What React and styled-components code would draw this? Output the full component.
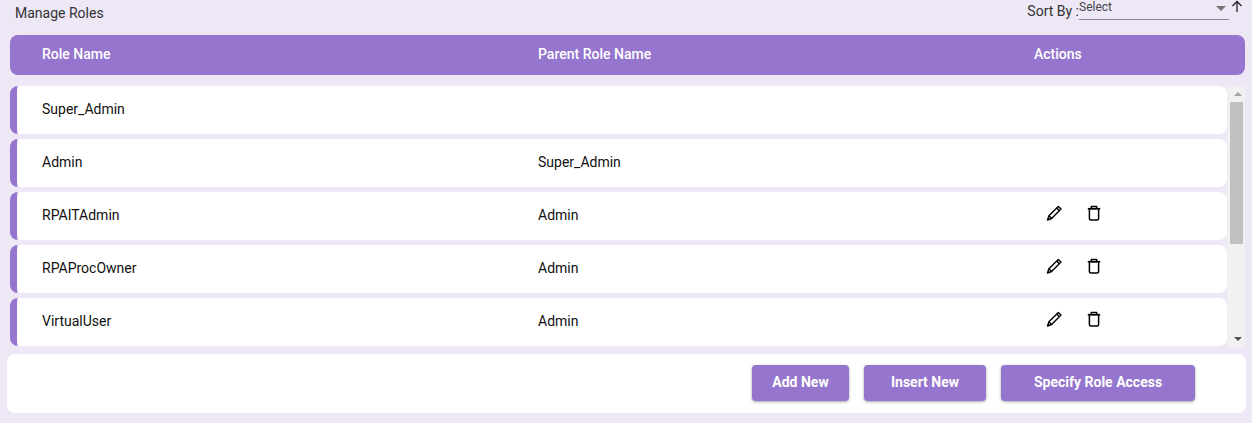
import React from "react";
import styled, { createGlobalStyle } from "styled-components";

const Global = createGlobalStyle`
  html, body { margin: 0; padding: 0; background: #ede7f6; }
  body { font-family: Roboto, "Liberation Sans", sans-serif; width: 1252px; height: 423px; overflow: hidden; }
  * { box-sizing: border-box; }
`;

const Page = styled.div`
  display: flex;
  flex-direction: column;
  height: 423px;
  padding: 0 6px 10px 7px;
`;
const TopBar = styled.div`
  display: flex;
  justify-content: space-between;
  height: 35px;
  padding: 0 2px 0 8px;
  color: #333;
`;
const Title = styled.div`
  font-size: 14px;
  line-height: 16px;
  margin-top: 5px;
`;
const SortArea = styled.div`
  display: flex;
  align-items: flex-start;
  font-size: 14px;
  line-height: 16px;
`;
const SortLabel = styled.span`
  margin-top: 3px;
`;
const SortSelect = styled.div`
  position: relative;
  width: 150px;
  height: 20px;
  border-bottom: 1px solid #8b8794;
  font-size: 12px;
  line-height: 14px;
  color: #444;
`;
const Caret = styled.i`
  position: absolute;
  right: 3px;
  top: 6px;
  border-left: 5px solid transparent;
  border-right: 5px solid transparent;
  border-top: 5px solid #757575;
`;
const SortIcon = styled.svg`
  width: 14px;
  height: 14px;
  margin: 0 0 0 1px;
  color: #222;
`;
const HeaderRow = styled.div`
  display: grid;
  grid-template-columns: 496px 496px 1fr;
  align-items: center;
  height: 40px;
  margin: 0 0 11px 3px;
  width: 1235px;
  padding: 0 0 2px 32px;
  border-radius: 8px;
  background: #9575cd;
  color: #fff;
  font-size: 14px;
  font-weight: 500;
`;
const ListArea = styled.div`
  display: flex;
  height: 261px;
  margin-left: 3px;
  width: 1235px;
`;
const Rows = styled.div`
  display: flex;
  flex-direction: column;
  gap: 5px;
  width: 1217px;
`;
const Row = styled.div`
  display: grid;
  grid-template-columns: 496px 496px 1fr;
  align-items: center;
  flex: none;
  height: 48px;
  padding: 0 0 2px 25px;
  border-left: 7px solid #9575cd;
  border-radius: 8px;
  background: #fff;
  color: #111;
  font-size: 14px;
`;
const Actions = styled.div`
  display: flex;
  align-items: center;
  gap: 24px;
  padding: 0 0 4px 12px;
`;
const IconButton = styled.span`
  display: flex;
  width: 16px;
  height: 16px;
  color: #000;
`;
const Scrollbar = styled.div`
  display: flex;
  flex-direction: column;
  align-items: stretch;
  width: 18px;
  background: #f1f1f1;
`;
const ArrowBox = styled.div`
  display: flex;
  align-items: center;
  justify-content: center;
  flex: none;
  height: 16px;
  padding-left: 3px;
`;
const ArrowUp = styled.i`
  border-left: 4px solid transparent;
  border-right: 4px solid transparent;
  border-bottom: 4px solid #a3a3a3;
`;
const ArrowDown = styled.i`
  border-left: 4px solid transparent;
  border-right: 4px solid transparent;
  border-top: 4px solid #505050;
`;
const Thumb = styled.div`
  flex: none;
  height: 142px;
  margin: 0 2px 0 3px;
  background: #c1c1c1;
`;
const Spacer = styled.div`
  flex: 1;
`;
const Footer = styled.div`
  display: flex;
  justify-content: flex-end;
  align-items: center;
  gap: 15px;
  height: 59px;
  margin-top: 7px;
  padding-right: 51px;
  width: 1239px;
  border-radius: 8px;
  background: #fff;
`;
const Action = styled.button`
  width: ${(p) => p.$w}px;
  height: 36px;
  margin-top: -1px;
  padding: 0 0 2px;
  border: 0;
  border-radius: 4px;
  background: #9575cd;
  color: #fff;
  font-family: inherit;
  font-size: 14px;
  font-weight: 700;
  box-shadow: 0 1px 3px rgba(0, 0, 0, 0.35);
`;

const Pencil = () => (
  <svg viewBox="0 0 16 16" width="16" height="16" fill="none" stroke="currentColor" strokeWidth="1.4" strokeLinejoin="round">
    <path d="M12.3 1.4 15 4.1 5.6 13.5 1.5 15 2.9 10.8Z" />
    <path d="M10.7 3 13.4 5.7" />
    <path d="M2.9 10.8 5.6 13.5" />
  </svg>
);
const Trash = () => (
  <svg viewBox="0 0 16 16" width="16" height="16" fill="none" stroke="currentColor" strokeLinejoin="round">
    <path d="M3.4 4.5V13.4A1.5 1.5 0 0 0 4.9 14.9H11.1A1.5 1.5 0 0 0 12.6 13.4V4.5" strokeWidth="1.5" />
    <path d="M1.8 3.8H14.2" strokeWidth="1.8" />
    <path d="M5.3 3.2V1.6H10.7V3.2" strokeWidth="1.5" />
  </svg>
);

const roles = [
  { name: "Super_Admin", parent: "", editable: false },
  { name: "Admin", parent: "Super_Admin", editable: false },
  { name: "RPAITAdmin", parent: "Admin", editable: true },
  { name: "RPAProcOwner", parent: "Admin", editable: true },
  { name: "VirtualUser", parent: "Admin", editable: true },
];

export default function App() {
  return (
    <Page>
      <Global />
      <TopBar>
        <Title>Manage Roles</Title>
        <SortArea>
          <SortLabel>Sort By :</SortLabel>
          <SortSelect>
            Select
            <Caret />
          </SortSelect>
          <SortIcon viewBox="0 0 14 14" fill="none" stroke="currentColor" strokeWidth="1.3">
            <path d="M7 12V1.5M2.5 6 7 1.5 11.5 6" />
          </SortIcon>
        </SortArea>
      </TopBar>
      <HeaderRow>
        <span>Role Name</span>
        <span>Parent Role Name</span>
        <span>Actions</span>
      </HeaderRow>
      <ListArea>
        <Rows>
          {roles.map((r) => (
            <Row key={r.name}>
              <span>{r.name}</span>
              <span>{r.parent}</span>
              {r.editable ? (
                <Actions>
                  <IconButton><Pencil /></IconButton>
                  <IconButton><Trash /></IconButton>
                </Actions>
              ) : (
                <span />
              )}
            </Row>
          ))}
        </Rows>
        <Scrollbar>
          <ArrowBox><ArrowUp /></ArrowBox>
          <Thumb />
          <Spacer />
          <ArrowBox><ArrowDown /></ArrowBox>
        </Scrollbar>
      </ListArea>
      <Footer>
        <Action $w={97}>Add New</Action>
        <Action $w={122}>Insert New</Action>
        <Action $w={194}>Specify Role Access</Action>
      </Footer>
    </Page>
  );
}
